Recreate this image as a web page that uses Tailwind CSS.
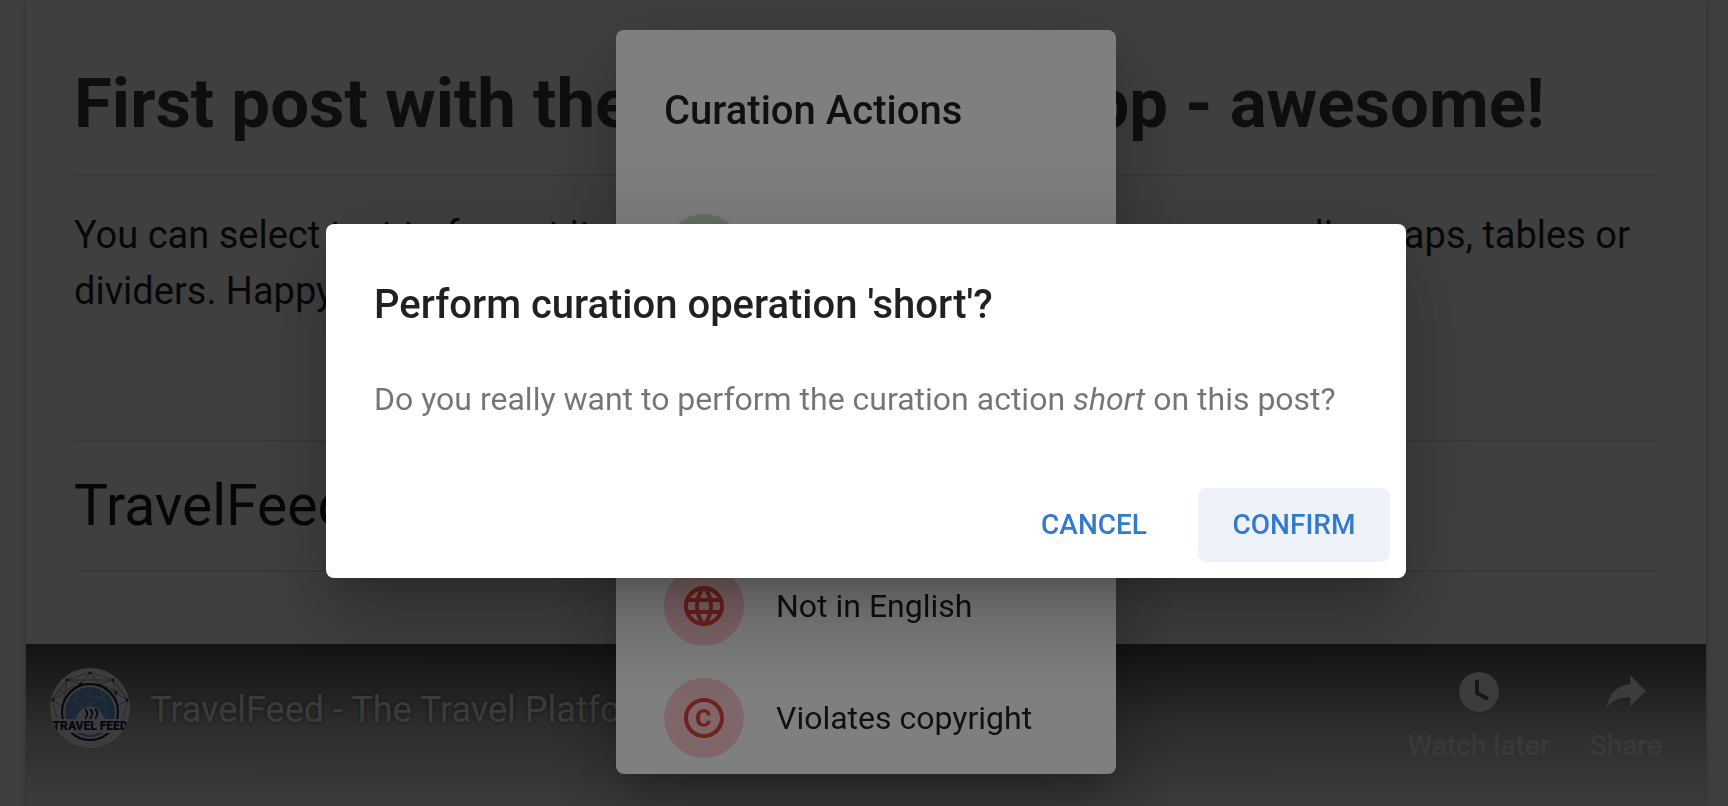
<!DOCTYPE html>
<html lang="en">
  <head>
    <meta charset="UTF-8" />
    <meta name="viewport" content="width=device-width, initial-scale=1.0" />
    <title>Curation - TravelFeed</title>
    <script src="https://cdn.jsdelivr.net/npm/@tailwindcss/browser@4"></script>
  </head>

  <body class="h-screen overflow-hidden bg-[#fafafa] font-[Roboto,sans-serif] text-black/87">
    <!-- Post -->
    <main class="h-full pr-[22px] pl-[26px]">
      <article class="flex h-full flex-col bg-[#fdfdfd] shadow-[0_2px_6px_rgba(0,0,0,0.2),0_2px_2px_rgba(0,0,0,0.14)]">
        <div class="px-12 pt-16">
          <h1 class="text-[69px] leading-20 font-bold whitespace-nowrap text-[#343a40]">
            First post with the TravelFeed dApp - awesome!
          </h1>
          <hr class="mt-[30px] border-t-2 border-[#e8e8e8]" />
          <p class="mt-[31px] text-[38px] leading-14 text-black/90">
            You can select text to format it or use the icons to embed some more media, maps, tables or
            dividers. Happy blogging!
          </p>
          <hr class="mt-[121px] border-t-2 border-[#e8e8e8]" />
          <h2 class="py-6 text-[57px] leading-20 text-black/90">TravelFeed</h2>
          <hr class="border-t-2 border-[#e8e8e8]" />
        </div>

        <!-- Video header -->
        <div class="mt-[72px] flex flex-1 items-start bg-linear-to-b from-[#4c4c4c] via-[#b4b4b4] to-[#ececec] pt-6 pr-11 pl-6">
          <svg class="size-20 shrink-0" viewBox="0 0 80 80" role="img" aria-label="TravelFeed logo">
            <defs>
              <clipPath id="disc"><circle cx="40" cy="40" r="40" /></clipPath>
            </defs>
            <g clip-path="url(#disc)">
              <rect width="80" height="80" fill="#f4f4f4" />
              <path d="M2 32L17 12L40 4L63 12L78 32M17 12L40 12L63 12M17 12L31 16L40 4L49 16L63 12M2 32L17 12L13 38L2 32L31 16M78 32L63 12L67 38L78 32L49 16M7 50L2 32M73 50L78 32M10 24L31 16M70 24L49 16" fill="none" stroke="#8a8a98" stroke-width="0.8" />
              <g fill="#33335c">
                <circle cx="40" cy="5" r="1.4" /><circle cx="17" cy="12" r="1.4" /><circle cx="63" cy="12" r="1.4" />
                <circle cx="3" cy="32" r="1.4" /><circle cx="77" cy="32" r="1.4" /><circle cx="31" cy="16" r="1.8" />
                <circle cx="66" cy="25" r="1.4" /><circle cx="13" cy="38" r="1.4" /><circle cx="67" cy="38" r="1.4" />
              </g>
              <circle cx="40" cy="44" r="28" fill="#f4f4f4" stroke="#14145a" stroke-width="2" />
              <circle cx="40" cy="44" r="25" fill="#6a9fd8" />
              <path d="M17 34Q40 22 63 34M15 44Q40 32 65 44M31 20Q21 36 25 55M40 19V66M49 20Q59 36 55 55M24 26Q40 36 58 56M57 26Q40 36 22 56" fill="none" stroke="#a9c9ec" stroke-width="0.8" />
              <circle cx="40" cy="53" r="14" fill="#f4f4f4" />
              <path d="M35 41q4 4 1 8q-1 2 1 4M40 41q4 4 1 8q-1 2 1 4M45 41q4 4 1 8q-1 2 1 4" fill="none" stroke="#20206a" stroke-width="1.8" />
              <rect y="51" width="80" height="14" fill="#f4f4f4" />
              <text x="40" y="62" text-anchor="middle" font-family="Roboto, sans-serif" font-weight="900" font-size="12" fill="#14145a">TRAVEL FEED</text>
            </g>
          </svg>
          <a href="#" class="mt-1.5 ml-5 text-4xl leading-18 text-[#eeeeee] [text-shadow:0_0_4px_rgba(0,0,0,0.5)]">TravelFeed - The Travel Platform</a>
          <div class="ml-auto flex gap-10 text-[28px] leading-8 font-medium text-[#e6e6e6]">
            <button type="button" class="flex flex-col items-center gap-3.5">
              <svg class="size-12" viewBox="0 0 48 48" fill="#f0f0f0">
                <circle cx="24" cy="24" r="21" fill="#000" fill-opacity="0.15" />
                <circle cx="24" cy="24" r="20" />
                <path d="M22 12V25L33 31" fill="none" stroke="#606060" stroke-width="4" />
              </svg>
              Watch later
            </button>
            <button type="button" class="flex flex-col items-center gap-3.5">
              <svg class="size-12" viewBox="0 0 48 48" fill="#f0f0f0" stroke="#000" stroke-opacity="0.15">
                <path d="M28 7L44 23L28 39V30C18 29 10 33 4 41C6 27 14 17 28 16Z" />
              </svg>
              Share
            </button>
          </div>
        </div>
      </article>
    </main>

    <!-- Curation actions -->
    <div class="fixed inset-0 flex items-center justify-center bg-black/50 pb-0.5 pl-1">
      <section
        class="w-[500px] rounded-lg bg-white shadow-[0_22px_30px_-14px_rgba(0,0,0,0.2),0_48px_76px_6px_rgba(0,0,0,0.14),0_18px_92px_16px_rgba(0,0,0,0.12)]"
        role="dialog"
        aria-labelledby="actions-title"
      >
        <h2 id="actions-title" class="px-12 pt-[49px] pb-[55px] text-[40px] leading-16 font-medium">Curation Actions</h2>
        <ul class="text-[32px] leading-12">
          <li>
            <button type="button" class="flex w-full items-center gap-8 px-12 py-4">
              <span class="size-20 rounded-full bg-[#c8e6c9]"></span>
              Curate
            </button>
          </li>
          <li>
            <button type="button" class="flex w-full items-center gap-8 px-12 py-4">
              <span class="size-20 rounded-full bg-[#c8e6c9]"></span>
              Honours
            </button>
          </li>
          <li class="mt-4">
            <button type="button" class="flex w-full items-center gap-8 px-12 py-4">
              <span class="size-20 rounded-full bg-[#ffcdd2]"></span>
              Too short
            </button>
          </li>
          <li>
            <button type="button" class="flex w-full items-center gap-8 px-12 py-4">
              <span class="flex size-20 items-center justify-center rounded-full bg-[#ffcdd2]">
                <svg class="size-12" viewBox="0 0 24 24" fill="#db4437">
                  <path d="M11.99 2C6.47 2 2 6.48 2 12s4.47 10 9.99 10C17.52 22 22 17.52 22 12S17.52 2 11.99 2zm6.93 6h-2.95c-.32-1.25-.78-2.45-1.38-3.56 1.84.63 3.37 1.91 4.33 3.56zM12 4.04c.83 1.2 1.48 2.53 1.91 3.96h-3.82c.43-1.43 1.08-2.76 1.91-3.96zM4.26 14C4.1 13.36 4 12.69 4 12s.1-1.36.26-2h3.38c-.08.66-.14 1.32-.14 2 0 .68.06 1.34.14 2H4.26zm.82 2h2.95c.32 1.25.78 2.45 1.38 3.56-1.84-.63-3.37-1.9-4.33-3.56zm2.95-8H5.08c.96-1.66 2.49-2.93 4.33-3.56C8.81 5.55 8.35 6.75 8.03 8zM12 19.96c-.83-1.2-1.48-2.53-1.91-3.96h3.82c-.43 1.43-1.08 2.76-1.91 3.96zM14.34 14H9.66c-.09-.66-.16-1.32-.16-2 0-.68.07-1.35.16-2h4.68c.09.65.16 1.32.16 2 0 .68-.07 1.34-.16 2zm.25 5.56c.6-1.11 1.06-2.31 1.38-3.56h2.95c-.96 1.65-2.49 2.93-4.33 3.56zM16.36 14c.08-.66.14-1.32.14-2 0-.68-.06-1.34-.14-2h3.38c.16.64.26 1.31.26 2s-.1 1.36-.26 2h-3.38z" />
                </svg>
              </span>
              Not in English
            </button>
          </li>
          <li>
            <button type="button" class="flex w-full items-center gap-8 px-12 py-4">
              <span class="flex size-20 items-center justify-center rounded-full bg-[#ffcdd2]">
                <svg class="size-12" viewBox="0 0 24 24" fill="#db4437">
                  <path d="M10.08 10.86c.05-.33.16-.62.3-.87s.34-.46.59-.62c.24-.15.54-.22.91-.23.23.01.44.05.63.13.2.09.38.21.52.36s.25.33.34.53.13.42.14.64h1.79c-.02-.47-.11-.9-.28-1.29s-.4-.73-.7-1.01-.66-.5-1.08-.66-.88-.23-1.39-.23c-.65 0-1.22.11-1.7.34s-.88.53-1.2.92-.56.84-.71 1.36S8 11.29 8 11.87v.27c0 .58.08 1.12.23 1.64s.39.97.71 1.35.72.69 1.2.91 1.05.34 1.7.34c.47 0 .91-.08 1.32-.23s.77-.36 1.08-.63.56-.58.74-.94.29-.74.3-1.15h-1.79c-.01.21-.06.4-.15.58s-.21.33-.36.46-.32.23-.52.3c-.19.07-.39.09-.6.1-.36-.01-.66-.08-.89-.23-.25-.16-.45-.37-.59-.62s-.25-.55-.3-.88-.08-.67-.08-1v-.27c0-.35.03-.68.08-1.01zM12 2C6.48 2 2 6.48 2 12s4.48 10 10 10 10-4.48 10-10S17.52 2 12 2zm0 18c-4.41 0-8-3.59-8-8s3.59-8 8-8 8 3.59 8 8-3.59 8-8 8z" />
                </svg>
              </span>
              Violates copyright
            </button>
          </li>
        </ul>
      </section>
    </div>

    <!-- Confirmation -->
    <div class="fixed inset-0 flex items-center justify-center bg-black/50 pb-1 pl-1">
      <section
        class="w-[1080px] rounded-lg bg-white shadow-[0_22px_30px_-14px_rgba(0,0,0,0.2),0_48px_76px_6px_rgba(0,0,0,0.14),0_18px_92px_16px_rgba(0,0,0,0.12)]"
        role="dialog"
        aria-labelledby="confirm-title"
      >
        <div class="px-12 pt-[49px]">
          <h2 id="confirm-title" class="text-[40px] leading-16 font-medium">Perform curation operation 'short'?</h2>
          <p class="mt-[38px] text-[32px] leading-12 text-black/54">
            Do you really want to perform the curation action <em>short</em> on this post?
          </p>
        </div>
        <div class="mt-[49px] flex justify-end gap-4 p-4 text-[28px] font-medium text-[#3479d0]">
          <button type="button" class="w-44 rounded-lg py-4 leading-[42px]">CANCEL</button>
          <button type="button" class="w-48 rounded-lg bg-[#eef3fb] py-4 leading-[42px]">CONFIRM</button>
        </div>
      </section>
    </div>
  </body>
</html>
